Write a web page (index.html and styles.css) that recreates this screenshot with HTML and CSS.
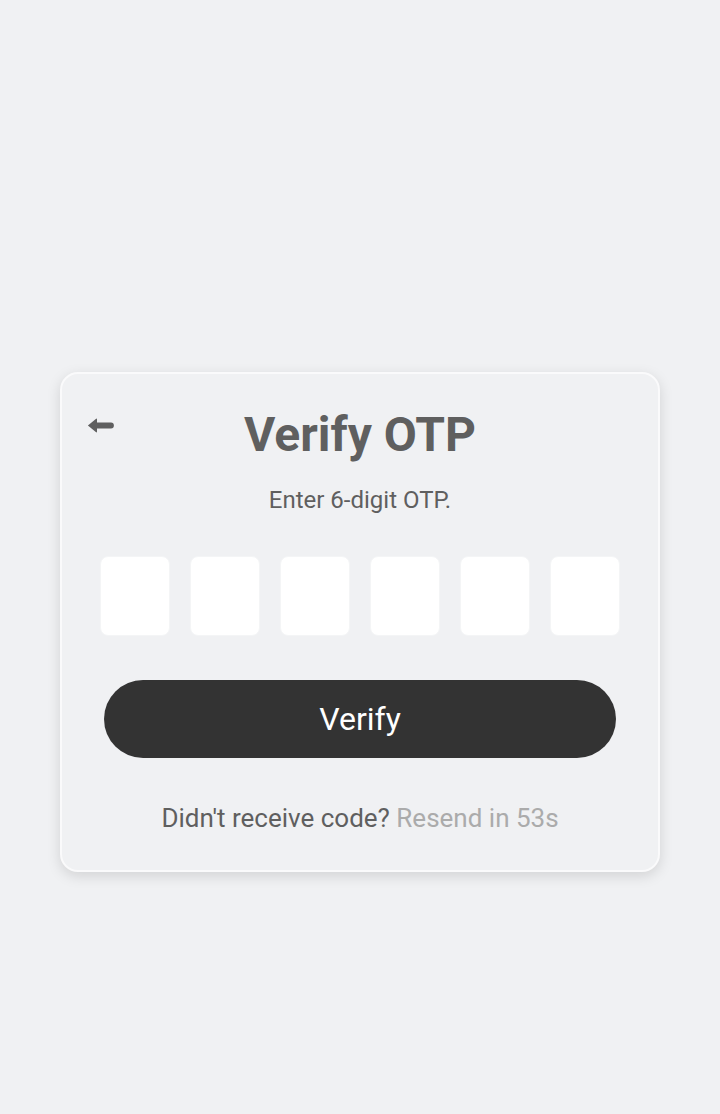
FILE: index.html
```html
<!DOCTYPE html>
<html lang="en">
<head>
<meta charset="utf-8">
<title>Verify OTP</title>
<link rel="stylesheet" href="styles.css">
</head>
<body>
<main class="page">
  <section class="card">
    <div class="header">
      <button class="back" aria-label="Back">
        <svg width="27" height="15" viewBox="0 0 27 15"><path d="M0.9 7.5 L8.8 0.9 Q10 0 10 1.4 V4.6 H24 A2.9 2.9 0 0 1 24 10.4 H10 V13.6 Q10 15 8.8 14.1 Z" fill="#5f5f5f"/></svg>
      </button>
      <h1 class="title">Verify OTP</h1>
      <span></span>
    </div>
    <p class="subtitle">Enter 6-digit OTP.</p>
    <div class="otp">
      <input class="digit" maxlength="1">
      <input class="digit" maxlength="1">
      <input class="digit" maxlength="1">
      <input class="digit" maxlength="1">
      <input class="digit" maxlength="1">
      <input class="digit" maxlength="1">
    </div>
    <button class="verify">Verify</button>
    <p class="resend">Didn't receive code? <span class="muted">Resend in 53s</span></p>
  </section>
</main>
</body>
</html>
```
FILE: styles.css
```css
html, body {
  margin: 0;
  padding: 0;
  background: #f0f1f3;
  font-family: Roboto, "Noto Sans", sans-serif;
}
.page {
  display: flex;
  justify-content: center;
  align-items: flex-start;
  min-height: 100vh;
  box-sizing: border-box;
  padding-top: 372px;
}
.card {
  width: 600px;
  box-sizing: border-box;
  background: #f0f1f3;
  border: 2px solid #fafafb;
  border-radius: 18px;
  box-shadow: 0 4px 14px rgba(0, 0, 0, 0.13);
  padding: 32px 26px 35px;
}
.header {
  display: grid;
  grid-template-columns: 1fr auto 1fr;
  align-items: start;
}
.back {
  justify-self: start;
  background: none;
  border: 0;
  padding: 0;
  margin-top: 12px;
  margin-left: -1px;
  display: block;
  line-height: 0;
}
.title {
  margin: 0;
  font-size: 48px;
  line-height: 58px;
  font-weight: 700;
  color: #5f5f5f;
}
.subtitle {
  margin: 20px 0 0;
  text-align: center;
  font-size: 24px;
  line-height: 32px;
  color: #5f5f5f;
}
.otp {
  display: flex;
  gap: 20px;
  padding: 0 12px;
  margin-top: 40px;
}
.digit {
  width: 70px;
  height: 80px;
  box-sizing: border-box;
  border: 1px solid #f4f5f6;
  border-radius: 8px;
  background: #ffffff;
  padding: 0;
  outline: none;
}
.verify {
  display: block;
  width: calc(100% - 32px);
  margin: 44px 16px 0;
  height: 78px;
  border: 0;
  border-radius: 39px;
  background: #333333;
  color: #ffffff;
  font-family: Roboto, "Noto Sans", sans-serif;
  font-size: 32px;
}
.resend {
  margin: 43px 0 0;
  text-align: center;
  font-size: 26px;
  line-height: 34px;
  color: #5f5f5f;
}
.muted {
  color: #ababab;
}
```
